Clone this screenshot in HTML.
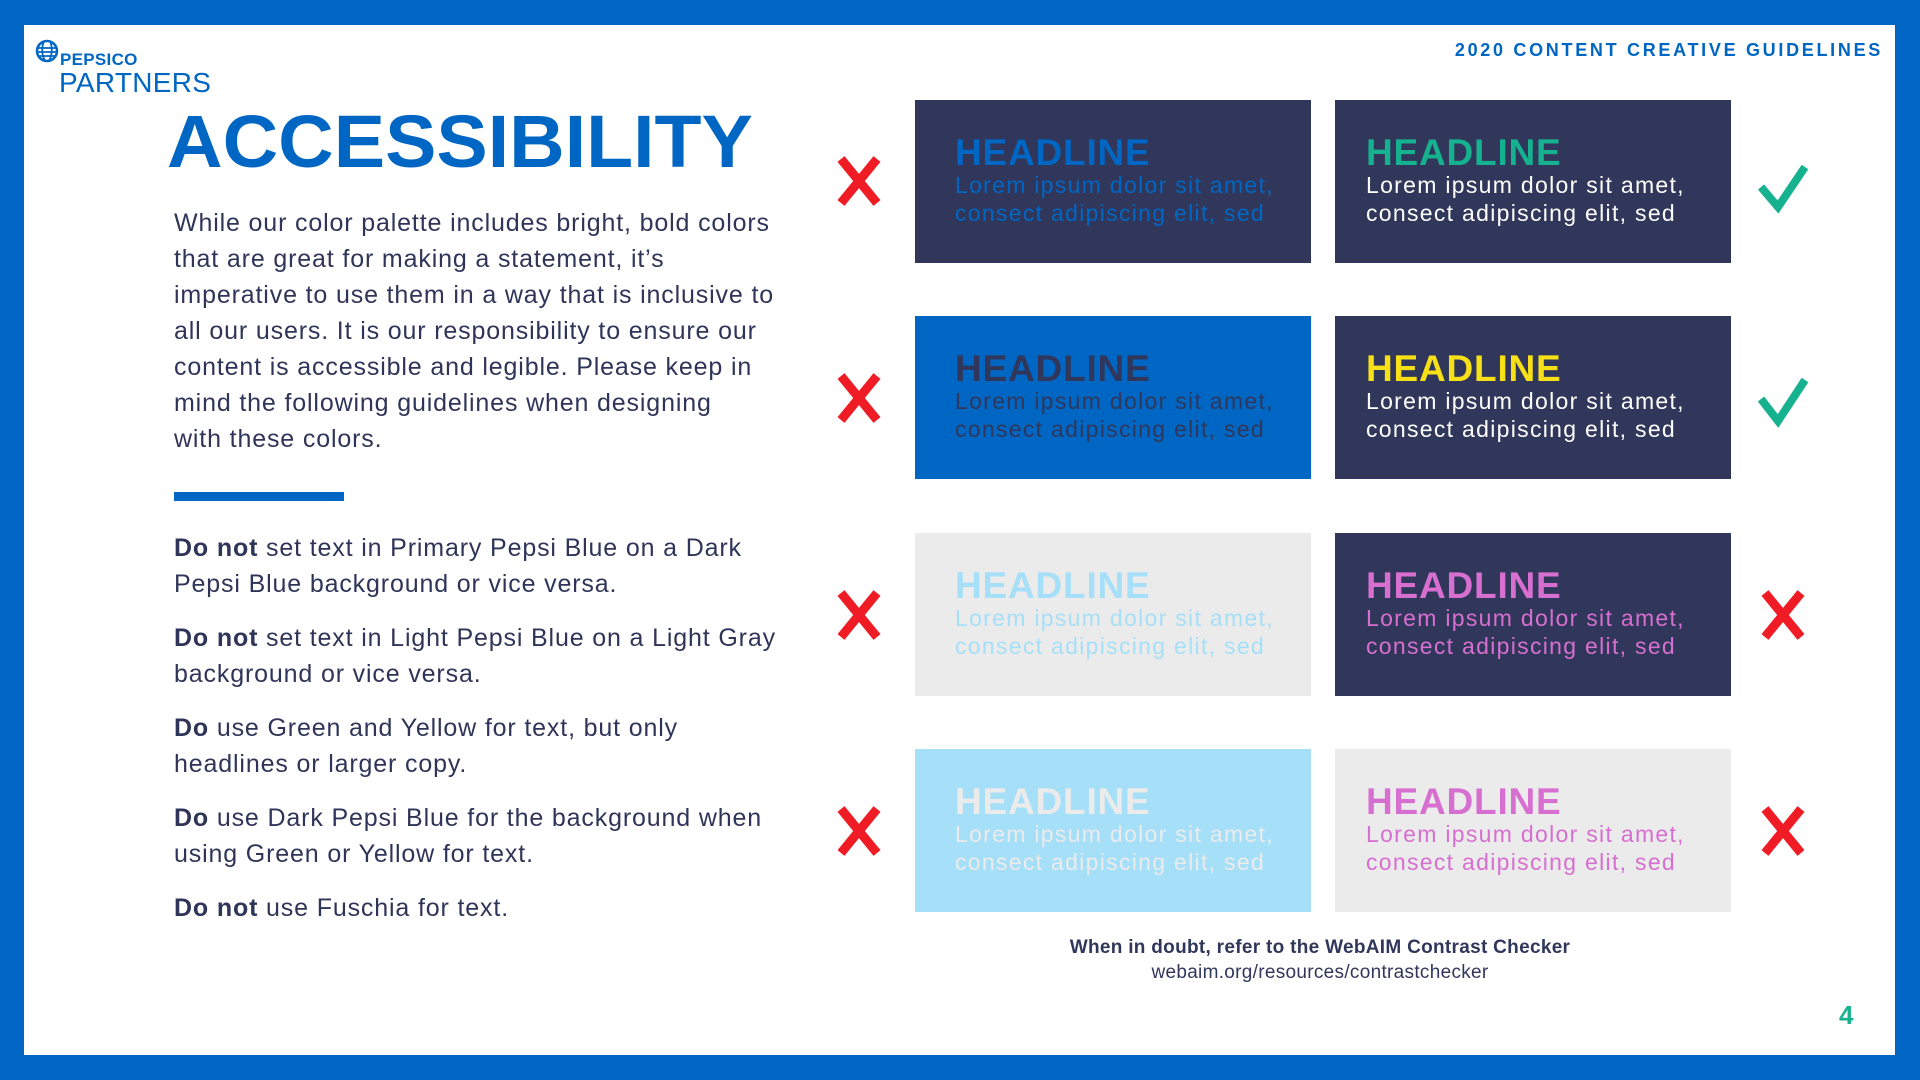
<!DOCTYPE html>
<html><head><meta charset="utf-8"><style>
*{margin:0;padding:0;box-sizing:border-box}
body{width:1920px;height:1080px;background:#0066c4;position:relative;overflow:hidden;font-family:"Liberation Sans",sans-serif}
.page{position:absolute;left:24px;top:25px;width:1871px;height:1030px;background:#fff}
.abs{position:absolute}
.box{position:absolute;width:396px;height:163px}
.box .h{position:absolute;left:40px;top:31px;font-size:37px;font-weight:bold;letter-spacing:0.8px;line-height:44px}
.box .t{position:absolute;left:40px;top:71px;font-size:23px;line-height:28px;white-space:nowrap;letter-spacing:1.3px}
.box.r .h,.box.r .t{left:31px}
.body{color:#2f3558;font-size:25px;line-height:36px;white-space:nowrap;letter-spacing:0.85px}
.bul p{margin-bottom:18px}
</style></head><body>
<div class="page">
<svg class="abs" style="left:11px;top:14px" width="24" height="24" viewBox="0 0 24 24"><circle cx="12" cy="12" r="10" fill="none" stroke="#0066c4" stroke-width="2.5"/><path d="M3 9h18M2 13h20M4 17h16M9 2q-4 10 1 20M15 2q4 10-1 20" stroke="#0066c4" stroke-width="1.8" fill="none"/></svg>
<div class="abs" style="left:36px;top:25px;font-size:17px;font-weight:bold;color:#0066c4;letter-spacing:0.3px">PEPSICO</div>
<div class="abs" style="left:35px;top:42px;font-size:28px;color:#0066c4;letter-spacing:0.3px">PARTNERS</div>
<div class="abs" style="right:12px;top:15px;font-size:18px;font-weight:bold;color:#0066c4;letter-spacing:2.7px">2020 CONTENT CREATIVE GUIDELINES</div>
<div class="abs" style="left:143px;top:74px;font-size:74px;font-weight:bold;color:#0066c4;letter-spacing:0px;transform:scaleX(1.04);transform-origin:left">ACCESSIBILITY</div>
<div class="abs body" style="left:150px;top:180px">While our color palette includes bright, bold colors<br>that are great for making a statement, it’s<br>imperative to use them in a way that is inclusive to<br>all our users. It is our responsibility to ensure our<br>content is accessible and legible. Please keep in<br>mind the following guidelines when designing<br>with these colors.</div>
<div class="abs" style="left:150px;top:467px;width:170px;height:9px;background:#0066c4"></div>
<div class="abs body bul" style="left:150px;top:505px">
<p><b>Do not</b> set text in Primary Pepsi Blue on a Dark<br>Pepsi Blue background or vice versa.</p>
<p><b>Do not</b> set text in Light Pepsi Blue on a Light Gray<br>background or vice versa.</p>
<p><b>Do</b> use Green and Yellow for text, but only<br>headlines or larger copy.</p>
<p><b>Do</b> use Dark Pepsi Blue for the background when<br>using Green or Yellow for text.</p>
<p><b>Do not</b> use Fuschia for text.</p>
</div>
<div class="box" style="left:891px;top:75px;background:#30375a"><div class="h" style="color:#0066c4">HEADLINE</div><div class="t" style="color:#0066c4">Lorem ipsum dolor sit amet,<br>consect adipiscing elit, sed</div></div>
<div class="box r" style="left:1311px;top:75px;background:#30375a"><div class="h" style="color:#16b28f">HEADLINE</div><div class="t" style="color:#fff">Lorem ipsum dolor sit amet,<br>consect adipiscing elit, sed</div></div>
<div class="box" style="left:891px;top:291px;background:#0066c4"><div class="h" style="color:#30375a">HEADLINE</div><div class="t" style="color:#30375a">Lorem ipsum dolor sit amet,<br>consect adipiscing elit, sed</div></div>
<div class="box r" style="left:1311px;top:291px;background:#30375a"><div class="h" style="color:#f7e017">HEADLINE</div><div class="t" style="color:#fff">Lorem ipsum dolor sit amet,<br>consect adipiscing elit, sed</div></div>
<div class="box" style="left:891px;top:508px;background:#ebebeb"><div class="h" style="color:#a6dff8">HEADLINE</div><div class="t" style="color:#a6dff8">Lorem ipsum dolor sit amet,<br>consect adipiscing elit, sed</div></div>
<div class="box r" style="left:1311px;top:508px;background:#30375a"><div class="h" style="color:#d76fd0">HEADLINE</div><div class="t" style="color:#d76fd0">Lorem ipsum dolor sit amet,<br>consect adipiscing elit, sed</div></div>
<div class="box" style="left:891px;top:724px;background:#a6dff8"><div class="h" style="color:#ebebeb">HEADLINE</div><div class="t" style="color:#ebebeb">Lorem ipsum dolor sit amet,<br>consect adipiscing elit, sed</div></div>
<div class="box r" style="left:1311px;top:724px;background:#ebebeb"><div class="h" style="color:#d76fd0">HEADLINE</div><div class="t" style="color:#d76fd0">Lorem ipsum dolor sit amet,<br>consect adipiscing elit, sed</div></div>
<svg class="abs" style="left:0;top:0" width="1871" height="1030">
<g stroke="#ef1c25" stroke-width="9" fill="none">
<path d="M817 134L853 178M853 134L817 178"/>
<path d="M817 351L853 395M853 351L817 395"/>
<path d="M817 568L853 612M853 568L817 612"/>
<path d="M817 784L853 828M853 784L817 828"/>
<path d="M1741 568L1777 612M1777 568L1741 612"/>
<path d="M1741 784L1777 828M1777 784L1741 828"/>
</g>
<g stroke="#16b28f" stroke-width="8" fill="none">
<path d="M1737 162L1754 182L1781 142"/>
<path d="M1737 374L1754 396L1781 355"/>
</g>
</svg>
<div class="abs" style="left:796px;top:912px;width:1000px;text-align:center;color:#30375a;font-size:19px;font-weight:bold;letter-spacing:0.3px">When in doubt, refer to the WebAIM Contrast Checker</div>
<div class="abs" style="left:796px;top:937px;width:1000px;text-align:center;color:#30375a;font-size:19px;letter-spacing:0.3px">webaim.org/resources/contrastchecker</div>
<div class="abs" style="left:1815px;top:975px;color:#16b28f;font-size:26px;font-weight:bold">4</div>
</div>
</body></html>
